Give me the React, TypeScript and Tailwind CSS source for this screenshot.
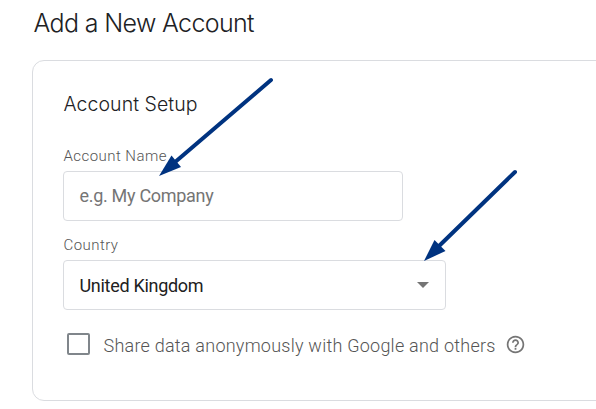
function HelpIcon() {
  return (
    <svg viewBox="0 0 24 24" className="relative top-[0.5px] ml-[9.5px] size-[21px] shrink-0" fill="#757575">
      <path d="M11 18h2v-2h-2v2zm1-16C6.48 2 2 6.48 2 12s4.48 10 10 10 10-4.48 10-10S17.520 2 12 2zm0 18c-4.41 0-8-3.59-8-8s3.59-8 8-8 8 3.59 8 8-3.59 8-8 8zm0-14c-2.21 0-4 1.79-4 4h2c0-1.1.9-2 2-2s2 .9 2 2c0 2-3 1.75-3 5h2c0-2.25 3-2.5 3-5 0-2.21-1.79-4-4-4z" />
    </svg>
  );
}

function Arrows() {
  return (
    <svg
      viewBox="0 0 596 409"
      className="pointer-events-none absolute top-0 left-0 h-[409px] w-[596px]"
      fill="#003380"
      stroke="#003380"
    >
      <path d="M271 80L174 163" strokeWidth="4" strokeLinecap="round" />
      <path d="M159 176L171.500 155.500L181 167Z" stroke="none" />
      <path d="M515 172L438 247" strokeWidth="4" strokeLinecap="round" />
      <path d="M424 261L434.500 240L445.500 251Z" stroke="none" />
    </svg>
  );
}

export default function App() {
  return (
    <main className="relative h-[409px] w-[596px] overflow-hidden bg-white font-['Roboto',sans-serif]">
      <h1 className="ml-[33.5px] flex h-[60px] items-start pt-[8px] font-['Inter',sans-serif] text-[25px] leading-[30px] font-light tracking-[-0.65px] whitespace-nowrap text-[#202124]">
        Add a New Account
      </h1>
      <section className="ml-[32px] flex h-[341px] w-[620px] flex-col items-start rounded-[12px] border border-[#dadce0] pl-[30px]">
        <h2 className="mt-[31px] pl-[0.5px] font-['Inter',sans-serif] text-[19.5px] leading-[24px] font-light tracking-[0.05px] whitespace-nowrap text-[#202124]">
          Account Setup
        </h2>
        <label className="mt-[30px] h-[25px] pl-[0.5px] text-[15px] leading-[20px] font-light tracking-[0.45px] whitespace-nowrap text-[#555555]">
          Account Name
        </label>
        <div className="flex h-[50px] w-[340px] items-center rounded-[4px] border border-[#dadce0] pb-[2px] pl-[15.5px] text-[18px] tracking-[-0.3px] whitespace-nowrap text-[#757575]">
          <span>e.g. My Company</span>
        </div>
        <label className="mt-[14px] h-[25px] pl-[0.5px] text-[15px] leading-[20px] font-light tracking-[0.45px] whitespace-nowrap text-[#555555]">
          Country
        </label>
        <div className="flex h-[50px] w-[383px] items-center justify-between rounded-[4px] border border-[#dadce0] pr-[16px] pl-[15.5px] text-[18px] tracking-[-0.3px] whitespace-nowrap text-[#212121]">
          <span>United Kingdom</span>
          <svg viewBox="0 0 12 6" className="h-[6px] w-[12px]" fill="#757575">
            <path d="M0 0h12L6 6z" />
          </svg>
        </div>
        <div className="mt-[22px] flex h-[24px] items-center pl-[4px]">
          <span className="h-[22px] w-[23px] rounded-[2px] border-2 border-[#80868b]" />
          <span className="ml-[13.5px] pt-[4px] text-[18px] leading-[24px] font-light tracking-[0.235px] whitespace-nowrap text-[#555555]">
            Share data anonymously with Google and others
          </span>
          <HelpIcon />
        </div>
      </section>
      <Arrows />
    </main>
  );
}
